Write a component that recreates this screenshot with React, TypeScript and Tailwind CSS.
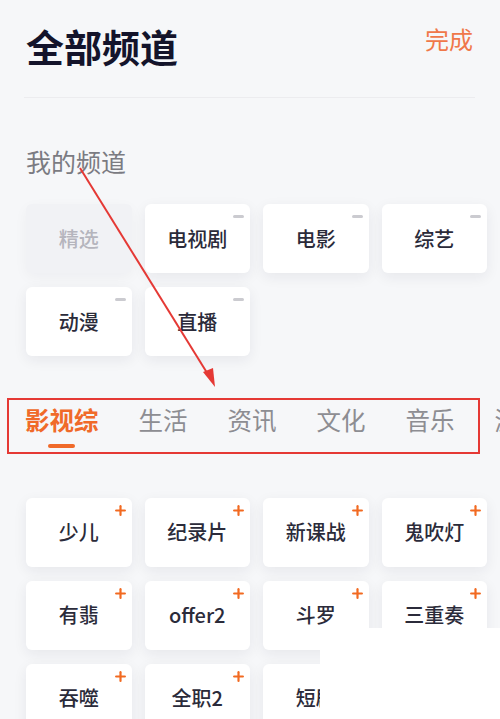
import { Plus } from "lucide-react";

const MY_CHANNELS = ["精选", "电视剧", "电影", "综艺", "动漫", "直播"];
const TABS = ["影视综", "生活", "资讯", "文化", "音乐", "游戏"];
const MORE_CHANNELS = ["少儿", "纪录片", "新课战", "鬼吹灯", "有翡", "offer2", "斗罗", "三重奏", "吞噬", "全职2", "短剧", "热播"];

const FONT = "font-['Noto_Sans_CJK_SC','Noto_Sans',sans-serif]";

function ChannelCard({ name, mode }: { name: string; mode: "fixed" | "remove" | "add" }) {
  return (
    <div
      className={
        "relative flex h-[69px] items-center justify-center rounded-[6px] " +
        (mode === "fixed"
          ? "bg-[#f1f2f5] text-[#b5b5bd] shadow-[0_4px_14px_rgba(30,30,60,0.04)]"
          : "bg-white text-[#2b2b3a] shadow-[0_4px_14px_rgba(30,30,60,0.07)]")
      }
    >
      <span className="text-[20px] font-medium leading-none">{name}</span>
      {mode === "remove" && (
        <span className="absolute right-[6px] top-[11px] h-[2.5px] w-[11px] rounded-full bg-[#cbcbd0]" />
      )}
      {mode === "add" && (
        <Plus className="absolute right-[4px] top-[5px] h-[15px] w-[15px] text-[#f26a21]" strokeWidth={3.5} />
      )}
    </div>
  );
}

export default function App() {
  return (
    <div className={"relative h-[719px] w-[500px] overflow-hidden bg-[#f6f7f9] " + FONT}>
      <header className="flex items-start justify-between pl-[26px] pr-[27px] pt-[27px]">
        <h1 className="text-[38px] font-bold leading-none text-[#14142b]">全部频道</h1>
        <button type="button" className="text-[24px] leading-none text-[#f0784a]">
          完成
        </button>
      </header>
      <div className="mx-[24px] mt-[32px] h-px w-[451px] bg-[#ececef]" />

      <p className="mt-[51px] pl-[26px] text-[25px] leading-none text-[#7b7b82]">我的频道</p>
      <div className="mt-[30px] grid grid-cols-4 gap-x-[13px] gap-y-[14px] pl-[26px] pr-[13px]">
        {MY_CHANNELS.map((name, i) => (
          <ChannelCard key={name} name={name} mode={i === 0 ? "fixed" : "remove"} />
        ))}
      </div>

      <nav className="mt-[52px] flex gap-[40px] whitespace-nowrap pl-[25px]">
        {TABS.map((tab, i) => (
          <div key={tab} className="flex shrink-0 flex-col items-center">
            <span
              className={
                "text-[24.5px] leading-none " + (i === 0 ? "font-bold text-[#f06a2a]" : "text-[#8d8d92]")
              }
            >
              {tab}
            </span>
            {i === 0 && <span className="mt-[11px] h-[4px] w-[27px] rounded-full bg-[#f06a2a]" />}
          </div>
        ))}
      </nav>

      <div className="mt-[50px] grid grid-cols-4 gap-x-[13px] gap-y-[14px] pl-[26px] pr-[13px]">
        {MORE_CHANNELS.map((name) => (
          <ChannelCard key={name} name={name} mode="add" />
        ))}
      </div>

      {/* annotation overlay: red arrow + box */}
      <svg className="pointer-events-none absolute inset-0" width="500" height="719">
        <line x1="80" y1="168" x2="209" y2="376" stroke="#e53935" strokeWidth="2" />
        <polygon points="215,387 203,372 213,368" fill="#e53935" />
        <rect x="8" y="399" width="471" height="54" fill="none" stroke="#e53935" strokeWidth="2" />
      </svg>
      <div className="absolute bottom-0 right-0 h-[91px] w-[180px] bg-white" />
    </div>
  );
}
